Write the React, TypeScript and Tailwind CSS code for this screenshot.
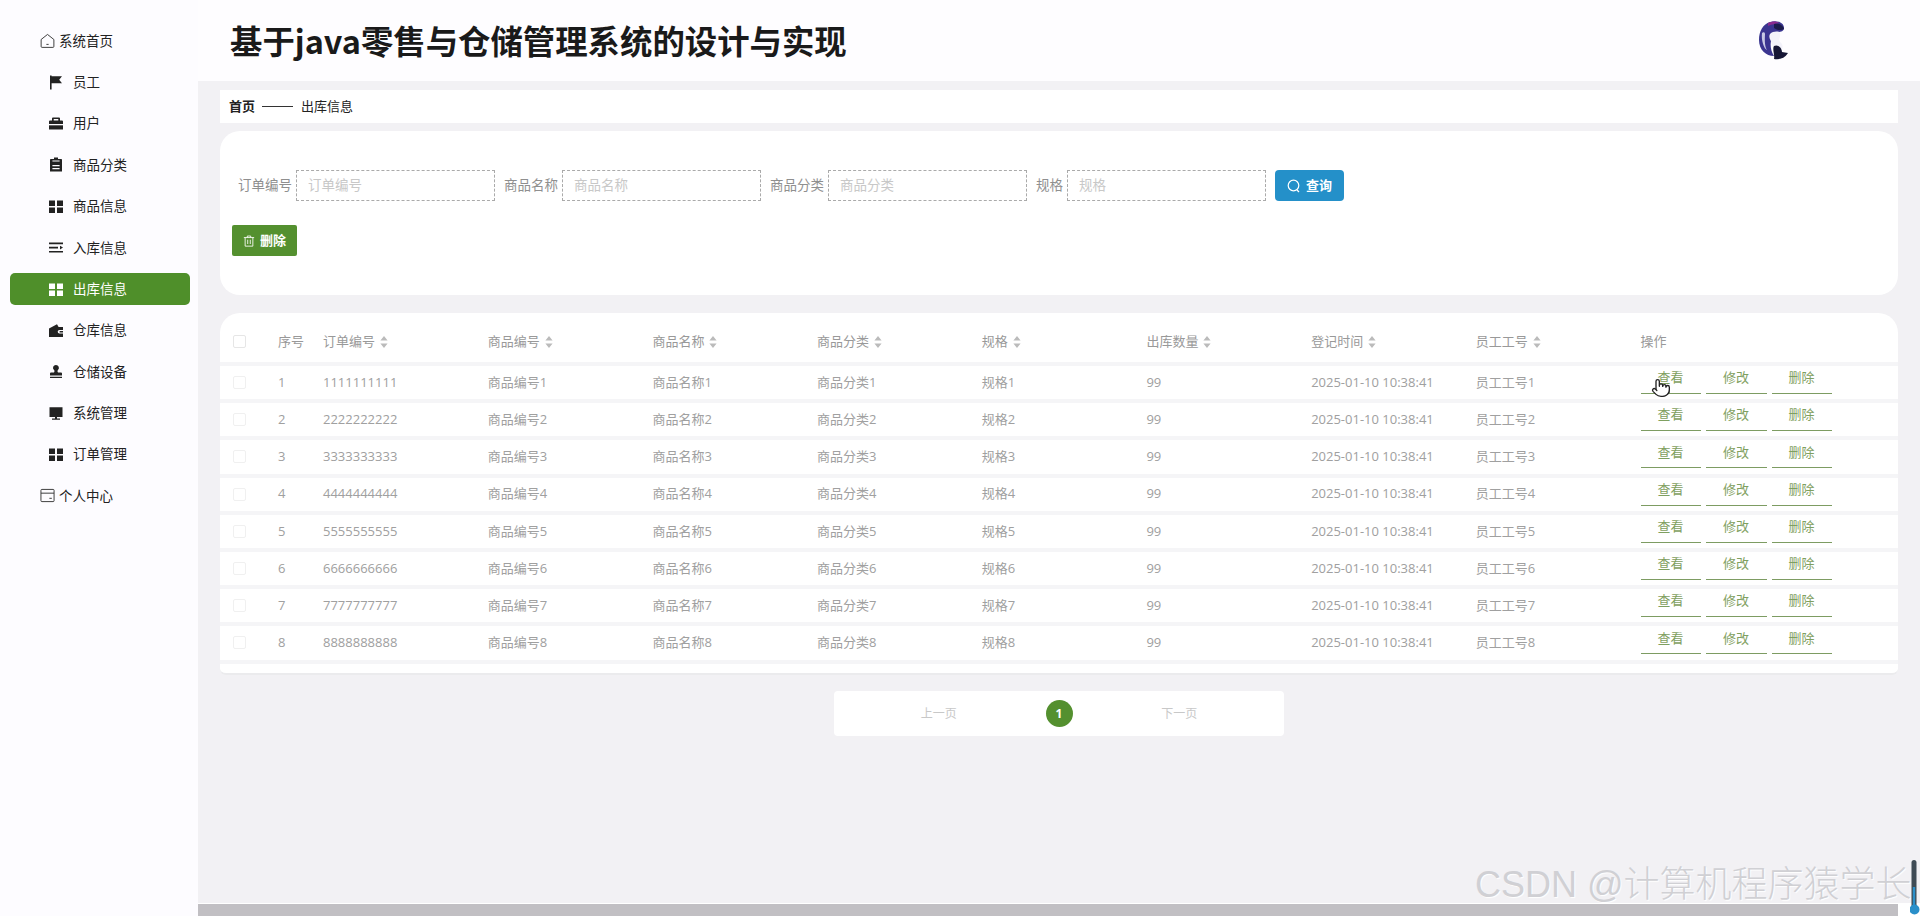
import React from "react";
import { Pointer } from "lucide-react";

const font = "font-['Open_Sans','Noto_Sans_CJK_SC',sans-serif]";

type IP = { className?: string };
const Svg = ({ className, children }: IP & { children: React.ReactNode }) => (
  <svg viewBox="0 0 14 14" className={className ?? "w-[14px] h-[14px]"} fill="currentColor">{children}</svg>
);
const Flag = (p: IP) => <Svg {...p}><path d="M1 0h1.6v14H1zM2.6 .8H13L10.2 4.2 13 7.8H2.6z" /></Svg>;
const Case = (p: IP) => <Svg {...p}><path fillRule="evenodd" d="M4 1h6a1 1 0 0 1 1 1v2h2a1 1 0 0 1 1 1v2.6H0V5a1 1 0 0 1 1-1h2V2a1 1 0 0 1 1-1zm.7 1.4V4h4.6V2.4z" /><path d="M0 8.8h14V13H0z" /></Svg>;
const Clip = (p: IP) => <Svg {...p}><path fillRule="evenodd" d="M5 0h4v1.5h3.2a.8.8 0 0 1 .8.8V14H1V2.3a.8.8 0 0 1 .8-.8H5zM3.4 4v.1h7.2V3H3.4zm0 3.4v1.4h7.2V7.4zm0 3v1.4h7.2v-1.4z" /></Svg>;
const Grid = (p: IP) => <Svg {...p}><path d="M0 1h6v5.4H0zM8 1h6v5.4H8zM0 8h6v5.4H0zM8 8h6v5.4H8z" /></Svg>;
const Indent = (p: IP) => <Svg {...p}><path d="M0 2h14v1.7H0zM0 6.2h9v1.7H0zM0 10.4h14v1.7H0zM11 5.2l3 1.9-3 1.9z" /></Svg>;
const Wallet = (p: IP) => <Svg {...p}><path fillRule="evenodd" d="M0 5 8 .8 9.6 3.6H14v3h-3.6a1.7 1.7 0 0 0 0 3.4H14v3.4H0zM10.6 7.6H14v1.4h-3.4z" /></Svg>;
const Stamp = (p: IP) => <Svg {...p}><path d="M7 .5a2.9 2.9 0 0 1 2 5c-.7.7-.6 1.6 0 2.4H12a1 1 0 0 1 1 1V11H1V9a1 1 0 0 1 1-1h3c.6-.8.7-1.7 0-2.4a2.9 2.9 0 0 1 2-5.1zM1 12.2h12v1.4H1z" /></Svg>;
const Monitor = (p: IP) => <Svg {...p}><path d="M.5 .8h13v9.6H.5zM6 10.4h2v1.6h3v1.3H3V12h3z" /></Svg>;
const Home = () => (
  <svg viewBox="0 0 16 16" className="w-[15px] h-[16px]" fill="none" stroke="#333" strokeWidth="1"><path d="M8 1 1.2 6.4v7.4a1 1 0 0 0 1 1h11.6a1 1 0 0 0 1-1V6.4z" /><path d="M6.8 11.6h2.4" /></svg>
);
const Card = () => (
  <svg viewBox="0 0 16 16" className="w-[15px] h-[15px]" fill="none" stroke="#333" strokeWidth="1"><rect x="1" y="1.5" width="14" height="13" rx="1" /><path d="M1 5.5h14M10 11h2.6" /></svg>
);

const menu: { t: string; I: (p: IP) => React.ReactElement; on?: boolean }[] = [
  { t: "员工", I: Flag },
  { t: "用户", I: Case },
  { t: "商品分类", I: Clip },
  { t: "商品信息", I: Grid },
  { t: "入库信息", I: Indent },
  { t: "出库信息", I: Grid, on: true },
  { t: "仓库信息", I: Wallet },
  { t: "仓储设备", I: Stamp },
  { t: "系统管理", I: Monitor },
  { t: "订单管理", I: Grid },
];

function Sidebar() {
  return (
    <aside className="w-[198px] shrink-0 bg-[#fdfcff] pt-5 text-[14px] text-[#222]">
      <div className="h-[41.4px] pl-10 flex items-center gap-1"><Home /><span className="text-[13.5px]">系统首页</span></div>
      {menu.map(({ t, I, on }) => (
        <div key={t} className="h-[41.4px] flex items-center pl-[10px] pr-[8px]">
          <div className={on ? "w-full h-8 rounded-[5px] bg-[#4f8f2a] text-white flex items-center pl-[39px] gap-[10px]" : "w-full h-8 flex items-center pl-[39px] gap-[10px]"}>
            <I className="w-[14px] h-[15px]" />
            <span className="text-[13.5px]">{t}</span>
          </div>
        </div>
      ))}
      <div className="h-[41.4px] pl-10 flex items-center gap-1"><Card /><span className="text-[13.5px]">个人中心</span></div>
    </aside>
  );
}

function Avatar() {
  return (
    <svg viewBox="0 0 32 40" className="w-8 h-10">
      <defs><filter id="b"><feGaussianBlur stdDeviation="0.6" /></filter></defs>
      <g filter="url(#b)">
        <path d="M12 1c6-2 14 0 14 6 0 3-3 4-6 4-5 1-6 5-7 9-1 5 0 10 3 15-8 0-15-6-15-16C1 10 5 3 12 1z" fill="#3a3690" />
        <path d="M10 2c4-2 9-2 11 0-3 1-7 1-11 3z" fill="#8a2c8e" />
        <path d="M4 12c1-1 3-1 3 1s-1 12 2 16c-3-1-6-10-5-17z" fill="#c8c8e4" />
        <path d="M16 3c5-1 9 1 10 5-3 2-8 1-10-1z" fill="#1f1c4c" />
        <path d="M12 13c3-3 9-3 10-1 1 4-2 6 0 9 3 2 3 5 2 7-6 1-9-1-10-5-1-4-4-6-2-10z" fill="#f3f2fa" />
        <path d="M16 25c4-2 8 2 8 6l6 1c-3 5-8 7-14 6 1-4-2-10 0-13z" fill="#171834" />
      </g>
    </svg>
  );
}

function Field({ label }: { label: string }) {
  return (
    <div className="flex items-center mr-[9px]">
      <label className="text-[13.5px] text-[#8f8f8f] mr-[4px]">{label}</label>
      <input readOnly placeholder={label} className="w-[199px] h-[31px] border border-dashed border-[#aaa] pl-[11px] pb-px text-[13.5px] outline-none bg-transparent placeholder:text-[#c8c8c8]" />
    </div>
  );
}

function Sort() {
  return (
    <svg viewBox="0 0 8 12" className="w-[8px] h-[12px] ml-[5px] text-[#bbb]" fill="currentColor"><path d="M4 0l3.6 4.4H.4zM4 12 .4 7.6h7.2z" /></svg>
  );
}

const grid = "grid grid-cols-[58px_45px_repeat(8,164.7px)_1fr] items-center";
const cols = ["订单编号", "商品编号", "商品名称", "商品分类", "规格", "出库数量", "登记时间", "员工工号"];

function Op({ t, hand }: { t: string; hand?: boolean }) {
  return (
    <button className="relative h-[28px] border-b border-[#7d9c62] text-[13px] text-[#7fa060] pb-[3px]">
      {t}
      {hand && (
        <Pointer className="absolute left-[10px] top-[10px] w-[20px] h-[24px] text-[#222] fill-white" strokeWidth={1.6} />
      )}
    </button>
  );
}

function Table() {
  const rows = [1, 2, 3, 4, 5, 6, 7, 8];
  return (
    <section className="mt-[18px] bg-white rounded-t-[20px] rounded-b-[6px] h-[362px] border-b-2 border-[#ebebed]">
      <div className={`${grid} h-[49px] pt-[8px] text-[13px] text-[#999]`}>
        <span className="ml-[13px] w-[13px] h-[13px] border border-[#e6e6e6] rounded-[2px]" />
        <span>序号</span>
        {cols.map((c) => (
          <span key={c} className="flex items-center">{c}<Sort /></span>
        ))}
        <span>操作</span>
      </div>
      <div className="flex flex-col gap-[4px] bg-[#f5f5f7] py-[4px]">
        {rows.map((n, i) => {
          const d = String(n);
          return (
            <div key={n} className={`${grid} h-[33.2px] bg-white text-[13px] text-[#a0a0a0]`}>
              <span className="ml-[13px] w-[13px] h-[13px] border border-[#f0f0f0] rounded-[2px]" />
              <span>{n}</span>
              <span>{d.repeat(10)}</span>
              <span>商品编号{n}</span>
              <span>商品名称{n}</span>
              <span>商品分类{n}</span>
              <span>规格{n}</span>
              <span>99</span>
              <span>2025-01-10 10:38:41</span>
              <span>员工工号{n}</span>
              <div className="flex gap-[5px] [&>button:nth-child(1)]:w-[60px] [&>button:nth-child(2)]:w-[61px] [&>button:nth-child(3)]:w-[60px] self-start">
                <Op t="查看" hand={i === 0} />
                <Op t="修改" />
                <Op t="删除" />
              </div>
            </div>
          );
        })}
      </div>
    </section>
  );
}

export default function App() {
  return (
    <div className={`relative flex w-[1920px] h-[916px] overflow-hidden bg-[#f2f1f4] ${font}`}>
      <Sidebar />
      <div className="flex-1 flex flex-col min-w-0">
        <header className="h-[81px] shrink-0 bg-[#fefdff] flex items-center justify-between pl-8 pr-[130px]">
          <h1 className="text-[32.4px] font-bold text-[#1a1a1a] font-['Noto_Sans_CJK_SC','Open_Sans',sans-serif]">基于java零售与仓储管理系统的设计与实现</h1>
          <Avatar />
        </header>
        <main className="flex-1 px-[22px] pt-[9px]">
          <nav className="h-[33px] bg-white flex items-center pl-[9px] text-[13px] text-[#222]">
            <b>首页</b>
            <span className="ml-[7px] w-[31px] h-px bg-[#333]" />
            <span className="ml-[8px]">出库信息</span>
          </nav>
          <section className="mt-[8px] h-[164px] bg-white rounded-[20px] pt-[39px] pl-[12px]">
            <div className="flex items-center pl-[6px]">
              <Field label="订单编号" />
              <Field label="商品名称" />
              <Field label="商品分类" />
              <Field label="规格" />
              <button className="w-[69px] h-[31px] rounded-[4px] bg-[#2490c9] text-white text-[13px] font-semibold flex items-center justify-center gap-[5px]">
                <svg viewBox="0 0 14 14" className="w-[14px] h-[14px]" fill="none" stroke="currentColor" strokeWidth="1.2"><circle cx="6.5" cy="6.5" r="5.3" /><path d="M10 11l2 2" /></svg>
                查询
              </button>
            </div>
            <button className="mt-[24px] w-[65px] h-[31px] rounded-[2px] bg-[#54902f] text-white text-[13px] font-semibold flex items-center justify-center gap-[5px]">
              <svg viewBox="0 0 14 14" className="w-[12px] h-[14px]" fill="none" stroke="currentColor" strokeWidth="1"><path d="M1 3h12M5 3V1.2h4V3M2.5 3v10h9V3M5.5 5.5v5M8.5 5.5v5" /></svg>
              删除
            </button>
          </section>
          <Table />
          <div className="mt-[16px] flex justify-center">
            <div className="w-[450px] h-[45px] bg-white rounded-[4px] grid grid-cols-[209.5px_31px_209.5px] items-center justify-items-center text-[12px] text-[#c8c8c8]">
              <span>上一页</span>
              <span className="w-[27px] h-[27px] rounded-full bg-[#54902f] text-white font-bold flex items-center justify-center">1</span>
              <span>下一页</span>
            </div>
          </div>
        </main>
        <div className="h-[13px] shrink-0 bg-white pt-px">
          <div className="w-[1700px] h-full bg-[#c1bfc3]" />
        </div>
      </div>
      <div className="absolute left-[1475px] top-[860px] whitespace-nowrap text-[36px] leading-[50px] font-light text-[#d0d0d4] [text-shadow:1px_1px_1px_#fff] font-['Liberation_Sans','Noto_Sans_CJK_SC',sans-serif]">CSDN @计算机程序猿学长</div>
      <svg viewBox="0 0 10 56" className="absolute left-[1910px] top-[860px] w-[10px] h-[56px]">
        <rect x="1.5" y="0" width="5" height="50" rx="2.5" fill="#3f4b55" />
        <rect x="2.8" y="27" width="2.4" height="22" fill="#2a8fc9" />
        <circle cx="4.5" cy="49.5" r="5" fill="#2a8fc9" />
      </svg>
    </div>
  );
}
